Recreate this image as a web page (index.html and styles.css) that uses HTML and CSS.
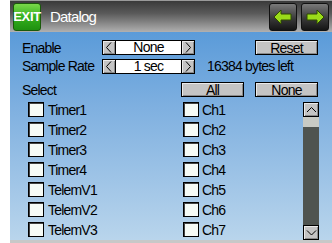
FILE: index.html
```html
<!DOCTYPE html>
<html lang="en">
<head>
    <meta charset="UTF-8">
    <title>Datalog</title>
    <link rel="stylesheet" href="styles.css">
</head>
<body>

<div class="screen">
    <!-- Titelbalk -->
    <div class="header">
        <div class="exit">EXIT</div>
        <div class="title">Datalog</div>
        <div class="nav">
            <div class="navbtn">
                <svg width="26" height="26" viewBox="0 0 26 26"><polygon points="4,13 11,6 11,10 21,10 21,16 11,16 11,20" fill="#9bdc1a" stroke="#2f4a00" stroke-width="1"/></svg>
            </div>
            <div class="navbtn">
                <svg width="26" height="26" viewBox="0 0 26 26"><polygon points="22,13 15,6 15,10 5,10 5,16 15,16 15,20" fill="#9bdc1a" stroke="#2f4a00" stroke-width="1"/></svg>
            </div>
        </div>
    </div>

    <div class="form">
        <div class="row">
            <div class="label">Enable</div>
            <div class="spinner">
                <div class="btn arrow"><svg width="12" height="13" viewBox="0 0 12 13"><polyline points="8,1.5 3.5,6.5 8,11.5" fill="none" stroke="#000" stroke-width="1"/></svg></div>
                <div class="field">None</div>
                <div class="btn arrow"><svg width="12" height="13" viewBox="0 0 12 13"><polyline points="4,1.5 8.5,6.5 4,11.5" fill="none" stroke="#000" stroke-width="1"/></svg></div>
            </div>
            <div class="btn wide reset">Reset</div>
        </div>
        <div class="row row2">
            <div class="label">Sample Rate</div>
            <div class="spinner">
                <div class="btn arrow"><svg width="12" height="13" viewBox="0 0 12 13"><polyline points="8,1.5 3.5,6.5 8,11.5" fill="none" stroke="#000" stroke-width="1"/></svg></div>
                <div class="field">1 sec</div>
                <div class="btn arrow"><svg width="12" height="13" viewBox="0 0 12 13"><polyline points="4,1.5 8.5,6.5 4,11.5" fill="none" stroke="#000" stroke-width="1"/></svg></div>
            </div>
            <div class="info">16384 bytes left</div>
        </div>
        <div class="row row3">
            <div class="label long">Select</div>
            <div class="btn wide">All</div>
            <div class="btn wide">None</div>
        </div>

        <div class="list">
            <div class="col left">
                <div class="item"><span class="check"></span>Timer1</div>
                <div class="item"><span class="check"></span>Timer2</div>
                <div class="item"><span class="check"></span>Timer3</div>
                <div class="item"><span class="check"></span>Timer4</div>
                <div class="item"><span class="check"></span>TelemV1</div>
                <div class="item"><span class="check"></span>TelemV2</div>
                <div class="item"><span class="check"></span>TelemV3</div>
            </div>
            <div class="col right">
                <div class="item"><span class="check"></span>Ch1</div>
                <div class="item"><span class="check"></span>Ch2</div>
                <div class="item"><span class="check"></span>Ch3</div>
                <div class="item"><span class="check"></span>Ch4</div>
                <div class="item"><span class="check"></span>Ch5</div>
                <div class="item"><span class="check"></span>Ch6</div>
                <div class="item"><span class="check"></span>Ch7</div>
            </div>
            <div class="scrollbar">
                <div class="btn sbtn"><svg width="13" height="13" viewBox="0 0 13 13"><polyline points="2,9 6.5,4.5 11,9" fill="none" stroke="#000" stroke-width="1"/></svg></div>
                <div class="thumb"></div>
                <div class="track"></div>
                <div class="btn sbtn"><svg width="13" height="13" viewBox="0 0 13 13"><polyline points="2,4.5 6.5,9 11,4.5" fill="none" stroke="#000" stroke-width="1"/></svg></div>
            </div>
        </div>
    </div>
</div>
<div class="bottom"></div>

</body>
</html>
```

FILE: styles.css
```css
body {
    margin: 0;
    background: #fff;
    font-family: "Liberation Sans", sans-serif;
    font-size: 14px;
    letter-spacing: -0.8px;
    color: #000;
    white-space: nowrap;
}
.screen {
    margin-left: 10px;
    width: 322px;
    height: 240px;
    background: linear-gradient(#4b92d6, #7fb0e0 45%, #b9d5ec);
    overflow: hidden;
}
.bottom {
    margin-left: 10px;
    height: 3px;
    background: #c8c8c8;
}

/* Titelbalk */
.header {
    height: 32px;
    display: flex;
    align-items: center;
    padding: 0 3px;
    box-sizing: border-box;
    border-top: 1px solid #9a9a9a;
    background: linear-gradient(#3a3a3a, #5a5a5a 40%, #b0b0b0);
}
.exit {
    width: 26px;
    height: 26px;
    border: 1px solid #1a5a0a;
    border-radius: 3px;
    background: linear-gradient(#7ad84a, #34b01e 50%, #1f9010);
    color: #fff;
    font-weight: bold;
    font-size: 13px;
    letter-spacing: -0.3px;
    display: flex;
    align-items: center;
    justify-content: center;
}
.title {
    margin-left: 9px;
    color: #fff;
    font-size: 15px;
    flex: 1;
}
.nav {
    display: flex;
    gap: 4px;
}
.navbtn {
    width: 26px;
    height: 26px;
    border: 1px solid #101010;
    border-radius: 3px;
    background: linear-gradient(#7a7a7a, #3a3a3a 55%, #151515);
    display: flex;
    align-items: center;
    justify-content: center;
}

/* Formulier */
.form {
    padding: 8px 0 0 12px;
}
.row {
    display: flex;
    align-items: center;
    height: 15px;
    margin-bottom: 4px;
}
.row2 {
    height: 14px;
    margin-bottom: 9px;
}
.row3 {
    margin-bottom: 5px;
}
.label {
    width: 80px;
}
.label.long {
    width: 159px;
}
.btn {
    box-sizing: border-box;
    height: 15px;
    background: #c4c4c4;
    border: 1px solid #000;
    box-shadow: inset 1px 1px 0 #eaeaea, inset -1px -1px 0 #8a8a8a;
    display: flex;
    align-items: center;
    justify-content: center;
}
.spinner {
    display: flex;
    height: 15px;
}
.arrow {
    width: 14px;
}
.field {
    box-sizing: border-box;
    width: 65px;
    height: 15px;
    background: #fff;
    border-top: 1px solid #000;
    border-bottom: 1px solid #000;
    text-align: center;
    line-height: 13px;
}
.wide {
    width: 63px;
}
.reset {
    margin-left: 60px;
}
.row3 .wide + .wide {
    margin-left: 11px;
}
.info {
    margin-left: 12px;
}

/* Lijst met vinkjes */
.list {
    display: flex;
    height: 138px;
}
.col {
    display: flex;
    flex-direction: column;
    gap: 5px;
}
.left {
    margin-left: 6px;
    width: 155px;
}
.right {
    width: 120px;
}
.item {
    height: 15px;
    display: flex;
    align-items: center;
}
.check {
    box-sizing: border-box;
    width: 16px;
    height: 15px;
    margin-right: 4px;
    background: #f6fbf6;
    border: 1px solid #000;
    box-shadow: inset 1px 1px 0 #444;
}
.right .check {
    margin-right: 3px;
}
.scrollbar {
    width: 16px;
    display: flex;
    flex-direction: column;
}
.sbtn {
    height: 15px;
    flex: none;
}
.thumb {
    height: 10px;
    background: #c8cac4;
}
.track {
    flex: 1;
    background: #4f5450;
}
```
